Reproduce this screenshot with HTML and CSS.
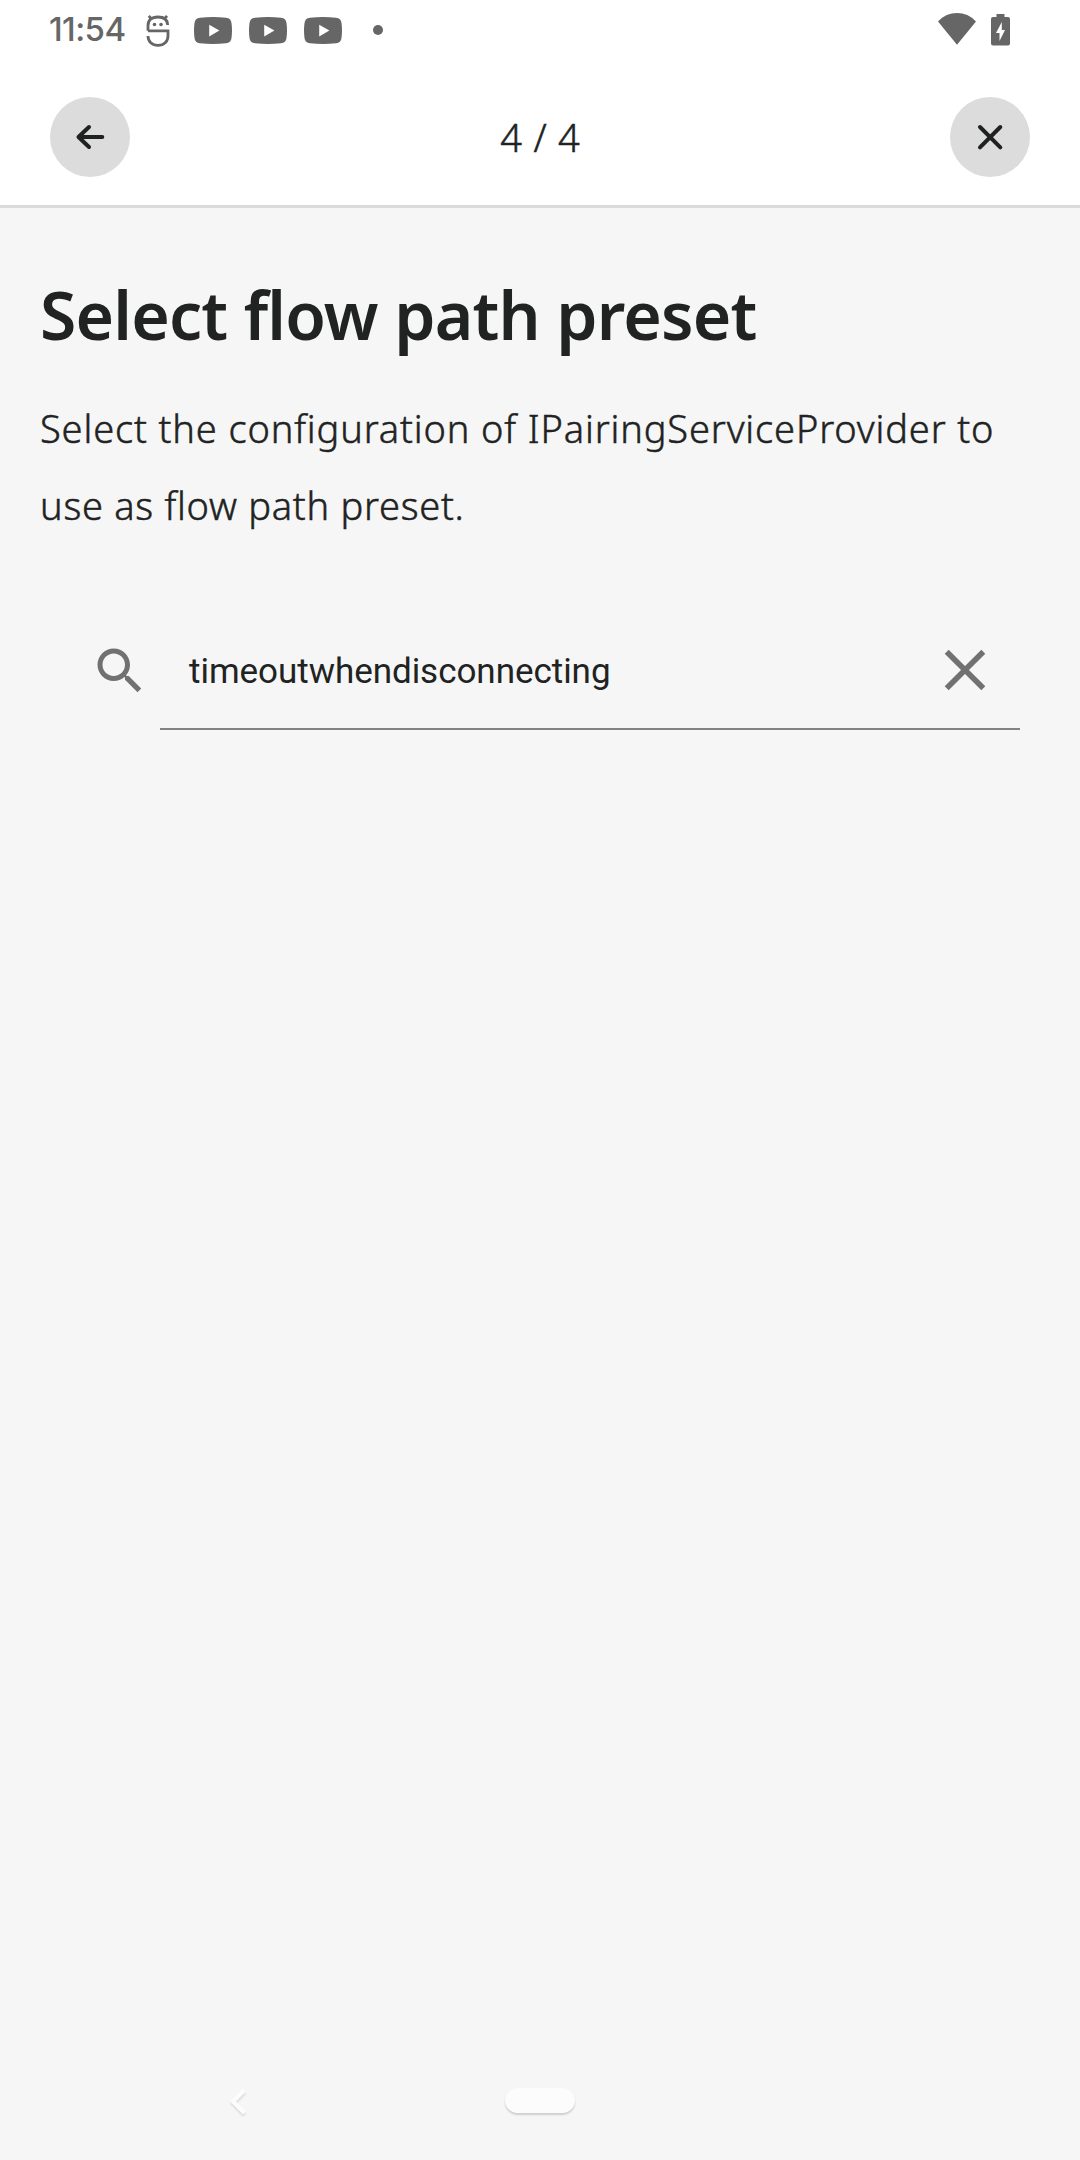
FILE: index.html
```html
<!DOCTYPE html>
<html lang="en">
<head>
<meta charset="utf-8">
<title>Select flow path preset</title>
<link rel="stylesheet" href="styles.css">
</head>
<body>
<div class="screen">
  <div class="status">
    <span class="clock">11:54</span>
    <svg class="icon-s" width="24" height="34" viewBox="0 0 24 34" fill="none" stroke="#666" stroke-width="2.8"><path d="M2 16.800V11.500C2 6 5.500 3 12 3s9.500 3 9.700 8M2 16.800h20v5.200c0 5.500-4 9.300-10 9.300s-10-3.800-10-9.300M2.800 1.800l3 3.500M21 1.800L18 5.300"/><circle cx="8.500" cy="10.500" r="1.800" fill="#666" stroke="none"/><circle cx="15" cy="10.500" r="1.800" fill="#666" stroke="none"/></svg>
    <svg class="tube" width="38" height="27" viewBox="0 0 38 27"><path fill="#666" fill-rule="evenodd" d="M6 .7Q19-.7 32 .7Q37 1.200 37.500 6Q38.500 13.500 37.500 21Q37 25.800 32 26.300Q19 27.700 6 26.300Q1 25.800.5 21Q-.5 13.500.5 6Q1 1.200 6 .7ZM15.200 7.800v11.700L25.400 13.600Z"/></svg>
    <svg class="tube" width="38" height="27" viewBox="0 0 38 27"><path fill="#666" fill-rule="evenodd" d="M6 .7Q19-.7 32 .7Q37 1.200 37.500 6Q38.500 13.500 37.500 21Q37 25.800 32 26.300Q19 27.700 6 26.300Q1 25.800.5 21Q-.5 13.500.5 6Q1 1.200 6 .7ZM15.200 7.800v11.700L25.400 13.600Z"/></svg>
    <svg class="tube" width="38" height="27" viewBox="0 0 38 27"><path fill="#666" fill-rule="evenodd" d="M6 .7Q19-.7 32 .7Q37 1.200 37.500 6Q38.500 13.500 37.500 21Q37 25.800 32 26.300Q19 27.700 6 26.300Q1 25.800.5 21Q-.5 13.500.5 6Q1 1.200 6 .7ZM15.200 7.800v11.700L25.400 13.600Z"/></svg>
    <span class="dot"></span>
    <svg class="wifi" width="38" height="32" viewBox="0 0 38 32"><path fill="#666" d="M19 31.800L0 8.400Q8 0 19 0T38 8.400Z"/></svg>
    <svg class="battery" width="19" height="32" viewBox="0 0 19 32"><path fill="#666" fill-rule="evenodd" d="M5.500 0h8v3H17q2 0 2 2v24.500q0 2-2 2H2q-2 0-2-2V5q0-2 2-2h3.500ZM10.800 8L5 19h3.500v8L14 16h-3.200Z"/></svg>
  </div>
  <header class="header">
    <button class="round" aria-label="Back"><svg width="40" height="40" viewBox="0 0 40 40" fill="none" stroke="#202222" stroke-width="4" stroke-linecap="round" stroke-linejoin="round"><path d="M32.300 20H8.500M19 10L8.500 20L19 30"/></svg></button>
    <span class="step">4 / 4</span>
    <button class="round" aria-label="Close"><svg width="40" height="40" viewBox="0 0 40 40" fill="none" stroke="#202222" stroke-width="4" stroke-linecap="round"><path d="M10 10l20.300 20.300M30.300 10L10 30.300"/></svg></button>
  </header>
  <main class="content">
    <h1 class="title">Select flow path preset</h1>
    <p class="text"><span class="line-one">Select the configuration of IPairingServiceProvider to</span><br><span class="line-two">use as flow path preset.</span></p>
    <div class="search">
      <svg class="glass" width="60" height="60" viewBox="0 0 24 24" fill="#717171"><path d="M15.500 14h-.79l-.28-.27C15.410 12.590 16 11.110 16 9.500 16 5.910 13.090 3 9.500 3S3 5.910 3 9.500 5.910 16 9.500 16c1.610 0 3.090-.59 4.230-1.570l.27.28v.79l5 4.990L20.490 19l-4.990-5zm-6 0C7.010 14 5 11.990 5 9.500S7.010 5 9.500 5 14 7.010 14 9.500 11.990 14 9.500 14z"/></svg>
      <div class="field">
        <span class="query">timeoutwhendisconnecting</span>
        <svg class="clear" width="42" height="42" viewBox="0 0 42 42" fill="none" stroke="#717171" stroke-width="5.600"><path d="M2.700 2.700l36.600 36.600M39.300 2.700L2.700 39.300"/></svg>
      </div>
    </div>
  </main>
  <nav class="nav">
    <svg class="chevron" width="20" height="32" viewBox="0 0 20 32" fill="none" stroke="#fcfcfc" stroke-width="4"><path d="M15.500 2L4 13.500L15.500 25"/></svg>
    <span class="pill"></span>
  </nav>
</div>
</body>
</html>
```
FILE: styles.css
```css
* { box-sizing: border-box; }
body { margin: 0; }
.screen {
  width: 1080px;
  height: 2160px;
  display: flex;
  flex-direction: column;
  background: #f6f6f6;
  color: #212222;
  font-family: "Noto Sans", sans-serif;
}
.status {
  height: 60px;
  padding: 0 70px 0 49px;
  display: flex;
  align-items: flex-start;
  background: #fff;
  color: #666;
}
.clock {
  width: 97px;
  font: 500 33px/58px Inter, sans-serif;
  letter-spacing: -0.6px;
}
.icon-s { margin: 14px 24px 0 0; }
.tube { margin: 17px 17px 0 0; }
.dot { width: 10px; height: 10px; margin: 25px 0 0 14px; border-radius: 50%; background: #666; }
.wifi { margin: 13px 15px 0 auto; }
.battery { margin-top: 14px; }
.header {
  height: 148px;
  padding: 37px 50px 0;
  display: flex;
  justify-content: space-between;
  align-items: flex-start;
  background: #fff;
  border-bottom: 3px solid #dbdbdb;
}
.round {
  width: 80px;
  height: 80px;
  padding: 0;
  border: 0;
  border-radius: 50%;
  display: flex;
  align-items: center;
  justify-content: center;
  background: #dcdcdc;
}
.step {
  font-size: 38px;
  font-weight: 300;
  line-height: 80px;
  white-space: nowrap;
  word-spacing: 1.5px;
  -webkit-text-stroke: 0.5px #212222;
}
.content { flex: 1; padding: 61px 40px 0; }
.title { margin: 0; font-size: 66px; line-height: 90px; font-weight: 600; white-space: nowrap; letter-spacing: -0.8px; }
.text {
  margin: 31px 0 0;
  font-size: 38px;
  font-weight: 300;
  line-height: 77px;
  white-space: nowrap;
  -webkit-text-stroke: 0.5px #212222;
}
.line-one { letter-spacing: 0.87px; }
.line-two { letter-spacing: 0.73px; }
.search { display: flex; margin: 70px 20px 0 50px; }
.glass { margin: 27px 10px 0 0; }
.field {
  flex: 1;
  height: 116px;
  padding: 0 34px 0 29px;
  display: flex;
  align-items: center;
  justify-content: space-between;
  border-bottom: 2px solid #828282;
}
.query { font: 400 35px/60px Roboto, sans-serif; padding-top: 2px; letter-spacing: -0.04px; }
.clear { margin-bottom: 3px; }
.nav { height: 90px; display: flex; align-items: flex-start; padding: 18px 0 0 229px; }
.chevron { filter: drop-shadow(0 2px 1px rgba(0,0,0,.12)); }
.pill { width: 70px; height: 25px; margin-left: 256px; border-radius: 13px; background: #fcfcfc; box-shadow: 0 2px 2px rgba(0,0,0,.16); }
```
